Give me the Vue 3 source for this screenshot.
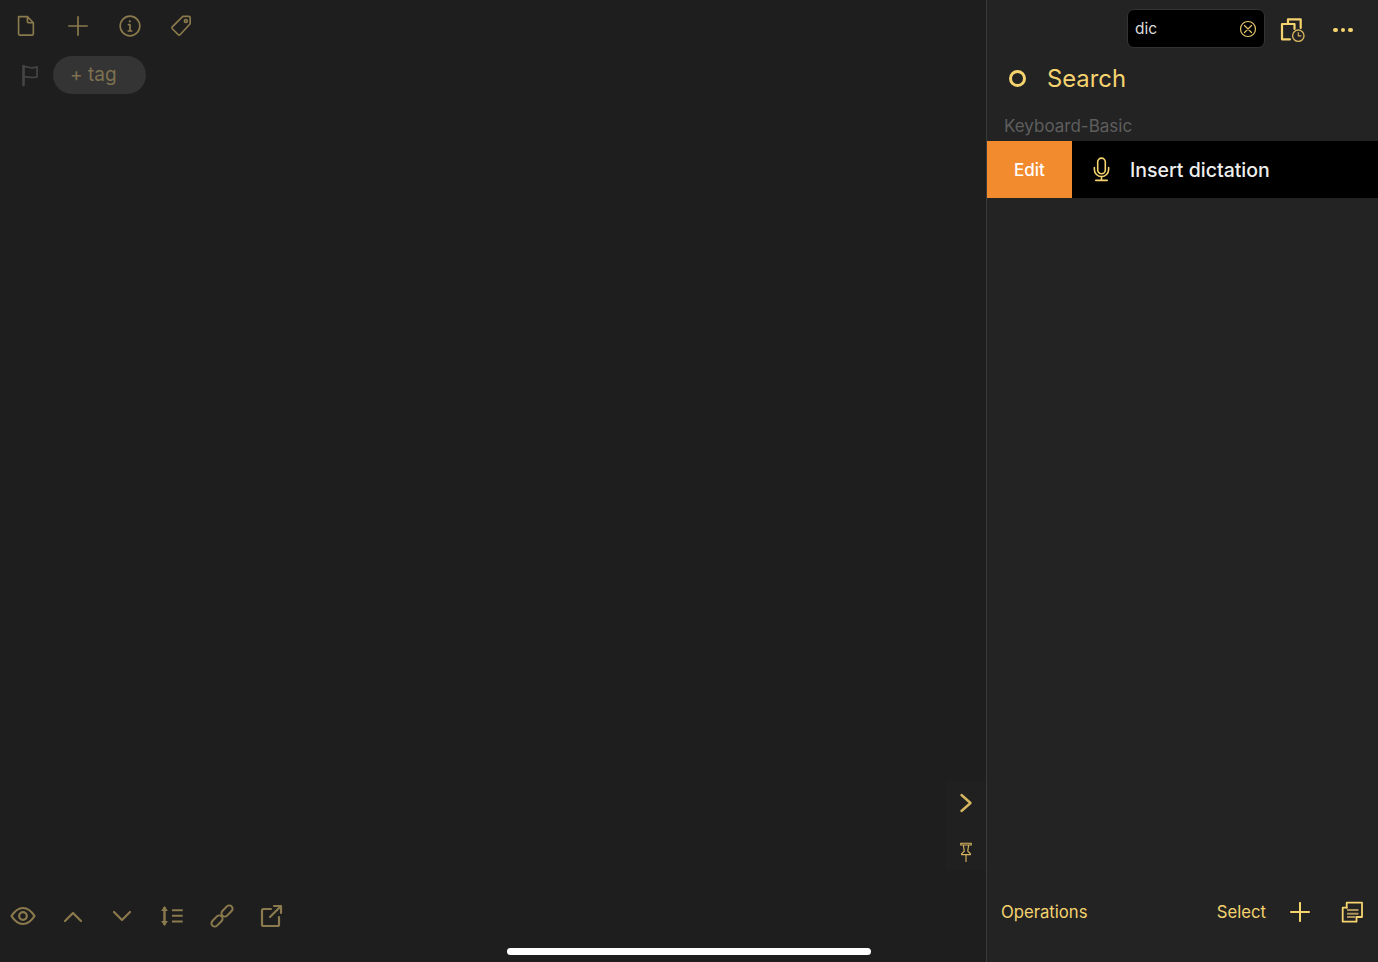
<script setup>
</script>

<template>
  <div class="root">
    <main class="editor">
      <div class="toolbar top">
        <svg class="ic" viewBox="0 0 24 24"><path d="M3.900 1.800h9.600l6.500 6.700v12a1.500 1.500 0 0 1-1.500 1.500H5.400a1.500 1.500 0 0 1-1.500-1.500zM13.500 1.800v4.700a2 2 0 0 0 2 2H20"/></svg>
        <svg class="ic" viewBox="0 0 24 24"><path d="M12 2v20M2 12h20"/></svg>
        <svg class="ic" viewBox="0 0 24 24"><circle cx="12" cy="12" r="10.700"/><path d="M12 10.500v7M10.300 10.500H12M10 17.500h4"/><circle class="solid" cx="11.800" cy="6.900" r="1.200"/></svg>
        <svg class="ic tagicon" viewBox="0 0 24 24"><path d="M14 1.500h6.500A1.500 1.500 0 0 1 22 3v6.500L11 21.500a1.500 1.500 0 0 1-2 0L2.500 15a1.500 1.500 0 0 1 0-2z"/><circle cx="17.300" cy="6.500" r="1.600"/></svg>
      </div>
      <div class="tagrow">
        <svg class="flag" viewBox="0 0 20 24"><path class="pole" d="M3.700 2.500v20"/><path d="M3.700 3.500C7 2 10 5 13 4.500c2-.3 3.500-.8 5-1V14c-2 .3-4 1-6.500.5-3-.7-5.500-1-8.300 0"/></svg>
        <div class="tag">+ tag</div>
      </div>
      <div class="grow"></div>
      <div class="toolbar bottom">
        <svg class="ib" viewBox="0 0 28 20"><path d="M2.500 10C6 4.500 9.500 2 14 2s8 2.500 11.500 8C22 15.500 18.500 18 14 18S6 15.500 2.500 10z"/><circle cx="14" cy="10" r="3.800"/></svg>
        <svg class="ib" viewBox="0 0 28 20"><path d="M6 15l8-8 8 8"/></svg>
        <svg class="ib" viewBox="0 0 28 20"><path d="M6 6l8 8 8-8"/></svg>
        <svg class="ib" viewBox="0 0 28 22"><path class="shaft" d="M6.500 3v16"/><path class="rule" d="M14 5.200h10.700M14 10.800h10.700M14 16.500h10.700"/><path class="solid" d="M6.500 1l3.400 5H3.100zM6.500 21l3.400-5H3.100z"/></svg>
        <svg class="ib link" viewBox="0 0 24 24"><rect x="0.500" y="13.700" width="13" height="6.600" rx="3.300" transform="rotate(-45 7 17)"/><rect x="10.500" y="3.700" width="13" height="6.600" rx="3.300" transform="rotate(-45 17 7)"/></svg>
        <svg class="ib" viewBox="0 0 24 24"><path d="M12 5H4.500A1.500 1.500 0 0 0 3 6.500v14A1.500 1.500 0 0 0 4.500 22h14a1.500 1.500 0 0 0 1.500-1.500V13M11 13L22 2M15 2h7v7"/></svg>
      </div>
      <div class="side">
        <svg class="chev" viewBox="0 0 14 20"><path d="M2.500 2l9 8-9 8"/></svg>
        <svg class="pin" viewBox="0 0 16 22"><path d="M2 1h12M2 1v2h12V1M5 3l1 7-3 3v1h10v-1l-3-3 1-7M8 14v8"/></svg>
      </div>
    </main>
    <aside class="panel">
      <div class="panelhead">
        <div class="search">
          <span class="query">dic</span>
          <svg class="clear" viewBox="0 0 18 18"><circle cx="9" cy="9" r="7.500"/><path d="M5.500 5.500l7 7M12.500 5.500l-7 7"/></svg>
        </div>
        <svg class="hist" viewBox="0 0 26 28"><path d="M2 8v15.300h8M2 8h12.500v5"/><path d="M8 8V3.300h12.700V12"/><circle cx="18.300" cy="19.700" r="5.700"/><path class="thin" d="M18.300 16.500v3.400h2.600"/></svg>
        <div class="dots"><i></i><i></i><i></i></div>
      </div>
      <div class="title"><span class="ring"></span><span>Search</span></div>
      <div class="group">Keyboard-Basic</div>
      <div class="row">
        <div class="edit">Edit</div>
        <svg class="mic" viewBox="0 0 20 26"><rect x="6" y="1" width="8" height="16.500" rx="4"/><path d="M2.500 11v2a7.500 7.500 0 0 0 15 0v-2M10 20.500v4M4 24.500h12"/></svg>
        <div class="label">Insert dictation</div>
      </div>
      <div class="grow"></div>
      <div class="panelfoot">
        <span class="ops">Operations</span>
        <span class="sel">Select</span>
        <svg class="plus" viewBox="0 0 22 22"><path d="M11 1v20M1 11h20"/></svg>
        <svg class="copy" viewBox="0 0 22 22"><path d="M5.700 6.700V1.700H21V16h-5.500"/><path d="M5.700 6.700h-4v14h13.800V16"/><path class="lines" d="M6 9h11.500M6 12.700h11.500M6 16h8"/></svg>
      </div>
    </aside>
    <div class="home"></div>
  </div>
</template>

<style scoped>
.root {
  position: relative;
  display: flex;
  width: 1378px;
  height: 962px;
  overflow: hidden;
  background: #1e1e1e;
  font-family: Inter, "Liberation Sans", sans-serif;
}
.editor {
  position: relative;
  display: flex;
  flex-direction: column;
  width: 986px;
  flex: none;
  background: #1e1e1e;
}
.grow { flex: 1; }
svg { display: block; flex: none; fill: none; stroke-linecap: round; stroke-linejoin: round; }
.toolbar { display: flex; align-items: center; }
.top { gap: 30px; padding: 15px 0 0 15px; }
.ic { width: 22px; height: 22px; stroke: #8b7a4d; stroke-width: 1.800; }
.tagicon { margin-left: -1px; }
.solid { fill: #8b7a4d; stroke: none; }
.tagrow { display: flex; align-items: center; gap: 14px; margin-top: 19px; padding-left: 20px; }
.flag { width: 19px; height: 24px; stroke: #444; stroke-width: 1.800; }
.pole { stroke-width: 2.800; }
.tag {
  width: 93px; height: 38px; line-height: 37px; box-sizing: border-box; padding-left: 17px;
  border-radius: 19px; background: #343434; color: #7d7150; font-size: 19px;
}
.bottom { gap: 21.700px; padding: 0 0 33px 9px; height: 27px; }
.ib { width: 28px; height: 24px; stroke: #8b7a4d; stroke-width: 2.200; }
.shaft { stroke-width: 2.400; }
.rule { stroke-width: 1.900; stroke-linecap: butt; }
.link { stroke-width: 2; }
.side {
  position: absolute; right: 0; top: 781px;
  width: 40px; height: 88px;
  background: #202020;
  display: flex; flex-direction: column; align-items: center;
}
.chev { width: 14px; height: 20px; margin: 12px 1px 0 0; stroke: #d6b560; stroke-width: 2.400; }
.pin { width: 14px; height: 20px; margin: 29px 1px 0 0; stroke: #d6b560; stroke-width: 1.300; }
.panel {
  flex: 1;
  display: flex;
  flex-direction: column;
  background: #232323;
  border-left: 1px solid #3a3a3a;
}
.panelhead { display: flex; align-items: center; padding: 9px 0 0 140px; height: 39px; }
.search {
  width: 138px; height: 39px; box-sizing: border-box;
  display: flex; align-items: center; justify-content: space-between;
  padding: 0 7px;
  background: #000; border: 1px solid #333; border-radius: 7px;
}
.query { color: #ddd; font-size: 15.500px; }
.clear { width: 18px; height: 18px; stroke: #e6c667; stroke-width: 1.200; }
.hist { width: 26px; height: 28px; margin: 3px 0 0 15px; stroke: #f5d36f; stroke-width: 2.200; }
.hist circle { stroke-width: 1.400; stroke: #d6b560; fill: #232323; }
.thin { stroke-width: 1.100; stroke: #d6b560; }
.dots { display: flex; gap: 3px; margin: 3px 0 0 27px; }
.dots i { width: 4.500px; height: 4.500px; border-radius: 50%; background: #f5d36f; }
.title {
  display: flex; align-items: center; gap: 21px;
  padding-left: 22px; margin-top: 11px; height: 39px;
  color: #f5d36f; font-size: 23.800px;
}
.ring { width: 17px; height: 17px; box-sizing: border-box; border: 3px solid #f5d36f; border-radius: 50%; }
.group { margin-top: 17px; padding-left: 17px; height: 24px; line-height: 23px; color: #5e5e5e; font-size: 17px; }
.row { display: flex; align-items: center; height: 57px; background: #000; margin-top: 2px; }
.edit {
  width: 85px; height: 57px; line-height: 58px; text-align: center;
  background: #f28b2e; color: #fff; font-size: 17px; font-weight: 500;
}
.mic { width: 19px; height: 25px; margin-left: 20px; stroke: #f5d36f; stroke-width: 1.700; }
.label { margin-left: 19px; color: #eee; font-size: 19.500px; font-weight: 500; }
.panelfoot { display: flex; align-items: center; padding: 0 15px 37px 14px; height: 27px; color: #f5d36f; font-size: 16.700px; }
.ops { flex: 1; }
.plus { width: 20px; height: 20px; margin-left: 24px; stroke: #f5d36f; stroke-width: 2.200; }
.copy { width: 22px; height: 22px; margin-left: 31px; stroke: #f5d36f; stroke-width: 1.800; }
.lines { stroke: #a8925a; stroke-width: 2; stroke-linecap: butt; }
.home {
  position: absolute; left: 507px; top: 948px;
  width: 364px; height: 7px; border-radius: 4px; background: #fff;
}
</style>
